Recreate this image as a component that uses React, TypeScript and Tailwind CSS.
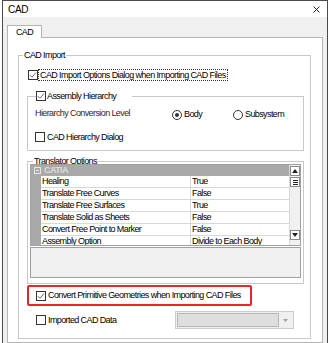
import React from "react";

const font = { fontFamily: '"Liberation Sans", Arial, sans-serif' };

function Check({ checked = false }: { checked?: boolean }) {
    return (
        <span className="inline-flex w-[10px] h-[10px] shrink-0 border border-[#333333] bg-white items-center justify-center">
            {checked && (
                <svg width="8" height="8" viewBox="0 0 8 8">
                    <path d="M1 4.2 L3 6.2 L7 1.5" fill="none" stroke="#6a6a6a" strokeWidth="1" />
                </svg>
            )}
        </span>
    );
}

function Radio({ checked = false }: { checked?: boolean }) {
    return (
        <span className="inline-flex w-[10px] h-[10px] shrink-0 rounded-full border border-[#333333] bg-white items-center justify-center">
            {checked && <span className="w-[4px] h-[4px] rounded-full bg-[#333333]" />}
        </span>
    );
}

const rows: [string, string][] = [
    ["Healing", "True"],
    ["Translate Free Curves", "False"],
    ["Translate Free Surfaces", "True"],
    ["Translate Solid as Sheets", "False"],
    ["Convert Free Point to Marker", "False"],
    ["Assembly Option", "Divide to Each Body"],
];

function PropertyGrid() {
    return (
        <div className="ml-[2px] -mt-[3px] w-[271px] flex flex-col">
            <div className="h-[82px] border border-[#a0a0a0] flex overflow-hidden">
                <div className="flex-1 flex flex-col bg-[#a9a9a9] pl-[1px]">
                    <div className="h-[11px] flex items-center shrink-0">
                        <span className="w-[7px] h-[7px] ml-[2px] border border-[#e8e8e8] flex items-center justify-center">
                            <span className="w-[3px] h-[1px] bg-[#e8e8e8]" />
                        </span>
                        <span className="ml-[3px] text-[#dcdcdc] font-bold">CATIA</span>
                    </div>
                    {rows.map(([k, v]) => (
                        <div key={k} className="h-[12px] shrink-0 flex ml-[9px] bg-white border-b border-[#d8d8d8]">
                            <div className="w-[150px] pl-[1px] border-r border-[#d8d8d8] leading-[11px] whitespace-nowrap overflow-hidden">{k}</div>
                            <div className="flex-1 pl-[1px] leading-[11px] whitespace-nowrap overflow-hidden">{v}</div>
                        </div>
                    ))}
                </div>
                <div className="w-[11px] bg-[#f0f0f0] flex flex-col items-center border-l border-[#d8d8d8]">
                    <div className="w-[10px] h-[10px] mt-[1px] bg-white border border-[#8a8a8a] flex items-center justify-center">
                        <svg width="6" height="4" viewBox="0 0 6 4"><path d="M0 4 L3 0 L6 4 Z" fill="#222" /></svg>
                    </div>
                    <div className="w-[10px] h-[10px] mt-[1px] bg-white border border-[#8a8a8a] flex flex-col items-center justify-center gap-[1px]">
                        <span className="w-[5px] h-[1px] bg-[#222]" />
                        <span className="w-[5px] h-[1px] bg-[#222]" />
                        <span className="w-[5px] h-[1px] bg-[#222]" />
                    </div>
                    <div className="flex-1" />
                    <div className="w-[10px] h-[10px] mb-[5px] bg-white border border-[#8a8a8a] flex items-center justify-center">
                        <svg width="6" height="4" viewBox="0 0 6 4"><path d="M0 0 L6 0 L3 4 Z" fill="#222" /></svg>
                    </div>
                </div>
            </div>
            <div className="h-[31px] mt-[1px] border border-[#a0a0a0] bg-[#f0f0f0]" />
        </div>
    );
}

export default function App() {
    return (
        <div className="w-[331px] h-[343px] bg-white overflow-hidden text-[9px] leading-[11px] tracking-[-0.6px] text-black" style={font}>
            <div className="ml-[2px] w-[326px] h-[343px] border-x border-t border-[#4a4a4a] flex flex-col">
                {/* title bar */}
                <div className="h-[16px] shrink-0 bg-white flex items-center justify-between pl-[5px] pr-[7px]">
                    <span className="mt-[1px] text-[10px] leading-[12px] tracking-[-0.3px]">CAD</span>
                    <svg width="7" height="7" viewBox="0 0 7 7" className="mt-[1px]">
                        <path d="M0.5 0.5 L6.5 6.5 M6.5 0.5 L0.5 6.5" stroke="#222" strokeWidth="1" />
                    </svg>
                </div>
                {/* body */}
                <div className="flex-1 bg-[#f0f0f0] px-[4px] flex flex-col">
                    <div className="h-[20px] shrink-0 flex items-end">
                        <div className="w-[35px] h-[13px] bg-white border-x border-t border-[#b4b4b4] -mb-[1px] relative flex items-center justify-center">
                            <span className="leading-[11px] mt-[1px]">CAD</span>
                        </div>
                    </div>
                    <div className="flex-1 bg-white border border-[#b4b4b4] flex flex-col">
                        <fieldset className="ml-[10px] mt-[11px] w-[293px] h-[290px] border border-[#c8c8c8] shrink-0">
                            <legend className="ml-[4px] px-[1px] leading-[12px]">CAD Import</legend>
                            {/* options dialog */}
                            <div className="ml-[9px] mt-[8px] h-[12px] flex items-center">
                                <Check checked />
                                <span className="border border-dotted border-[#333] px-[1px] leading-[10px]">
                                    CAD Import Options Dialog when Importing CAD Files
                                </span>
                            </div>
                            {/* assembly hierarchy */}
                            <fieldset className="ml-[8px] mt-[9px] w-[277px] h-[61px] border border-[#c8c8c8]">
                                <legend className="ml-[8px] pr-[16px] flex items-center gap-[1px] leading-[12px]">
                                    <Check checked />
                                    <span>Assembly Hierarchy</span>
                                </legend>
                                <div className="mt-[5px] ml-[7px] h-[12px] flex items-center">
                                    <span className="w-[137px] text-[#40202c]">Hierarchy Conversion Level</span>
                                    <span className="w-[61px] flex items-center gap-[2px] mt-[3px]">
                                        <Radio checked />
                                        <span>Body</span>
                                    </span>
                                    <span className="flex items-center gap-[2px] mt-[3px]">
                                        <Radio />
                                        <span>Subsystem</span>
                                    </span>
                                </div>
                                <div className="mt-[12px] ml-[7px] h-[12px] flex items-center gap-[2px]">
                                    <Check />
                                    <span>CAD Hierarchy Dialog</span>
                                </div>
                            </fieldset>
                            {/* translator options */}
                            <fieldset className="ml-[8px] mt-[4px] w-[277px] h-[129px] border border-[#c8c8c8]">
                                <legend className="ml-[5px] px-[1px] leading-[12px]">Translator Options</legend>
                                <PropertyGrid />
                            </fieldset>
                            {/* convert primitive */}
                            <div className="ml-[8px] mt-[1px] w-[225px] h-[21px] border-2 border-[#e8262b] rounded-[2px] flex items-center pl-[7px] gap-[2px]">
                                <Check checked />
                                <span className="whitespace-nowrap">Convert Primitive Geometries when Importing CAD Files</span>
                            </div>
                            {/* imported CAD data */}
                            <div className="ml-[17px] mt-[5px] h-[18px] flex items-center">
                                <span className="w-[139px] flex items-center gap-[2px]">
                                    <Check />
                                    <span>Imported CAD Data</span>
                                </span>
                                <div className="w-[119px] h-[18px] border border-[#cccccc] bg-[#f0f0f0] flex p-[1px]">
                                    <div className="flex-1 bg-[#dedede] border border-[#b8b8b8]" />
                                    <div className="w-[13px] flex items-center justify-center">
                                        <svg width="5" height="3" viewBox="0 0 5 3"><path d="M0 0 L5 0 L2.5 3 Z" fill="#a0a0a0" /></svg>
                                    </div>
                                </div>
                            </div>
                        </fieldset>
                    </div>
                </div>
            </div>
        </div>
    );
}
